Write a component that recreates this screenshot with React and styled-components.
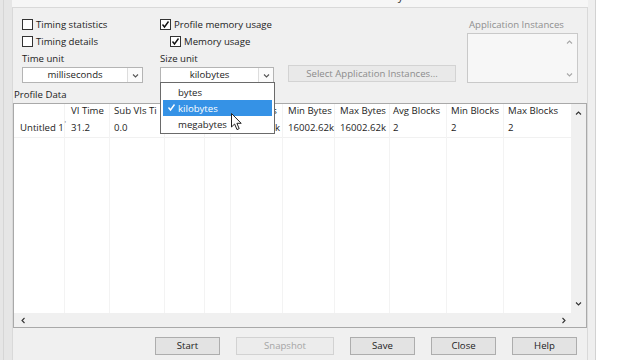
import React from 'react';
import styled, { createGlobalStyle } from 'styled-components';

const GlobalStyle = createGlobalStyle`
  html, body { margin: 0; padding: 0; background: #ffffff; }
  body {
    font-family: 'Open Sans', 'Noto Sans', sans-serif;
    font-size: 9.6px;
    color: #1c1c1c;
  }
`;

const Screen = styled.div`
  display: flex;
  width: 640px;
  height: 360px;
  overflow: hidden;
  background: #ffffff;
`;

const Window = styled.div`
  display: flex;
  width: 596px;
  height: 100%;
  background: #e8e8e8;
`;

const LeftStrip = styled.div`
  width: 12px;
  background: linear-gradient(to right, #e6e6e6 3px, #d6d6d6 3px, #d6d6d6 4px, #e6e6e6 4px);
`;

const RightStrip = styled.div`
  width: 7px;
  background: #efefef;
  border-right: 1px solid #d2d2d2;
`;

const Main = styled.div`
  flex: 1;
  display: flex;
  flex-direction: column;
  min-width: 0;
`;

const TitleStrip = styled.div`
  height: 7px;
  overflow: hidden;
  background: #f6f6f6;
`;

const Title = styled.span`
  display: block;
  margin-top: -10px;
  padding-left: 214px;
  font-size: 11px;
  line-height: 12px;
  color: #333;
`;

const Panel = styled.div`
  flex: 1;
  display: flex;
  flex-direction: column;
  background: #f0f0f0;
  border: 1px solid #d9d9d9;
  border-bottom: none;
`;

const TopSection = styled.div`
  display: flex;
  padding: 8px 0 0 9px;
`;

const Col = styled.div`
  display: flex;
  flex-direction: column;
  width: ${p => p.w}px;
  margin-right: ${p => p.gap || 0}px;
  justify-content: ${p => (p.bottom ? 'flex-end' : 'flex-start')};
`;

const CheckRow = styled.div`
  display: flex;
  align-items: center;
  height: 17px;
  gap: 3px;
  padding-left: ${p => p.indent || 0}px;
  white-space: nowrap;
`;

const Box = styled.span`
  width: 11px;
  height: 11px;
  box-sizing: border-box;
  border: 1px solid #333333;
  background: #ffffff;
  display: flex;
  align-items: center;
  justify-content: center;
`;

const FieldLabel = styled.div`
  height: 17px;
  line-height: 17px;
  white-space: nowrap;
  color: ${p => (p.muted ? '#8f8f8f' : '#1c1c1c')};
  padding-left: ${p => p.pad || 0}px;
`;

const SelectWrap = styled.div`
  position: relative;
`;

const Select = styled.div`
  display: flex;
  height: 16px;
  box-sizing: border-box;
  border: 1px solid #b4b4b4;
  background: #ffffff;
`;

const SelectText = styled.div`
  flex: 1;
  text-align: center;
  line-height: 14px;
`;

const ArrowBox = styled.div`
  width: 14px;
  border-left: 1px solid #dddddd;
  background: #fbfbfb;
  display: flex;
  align-items: center;
  justify-content: center;
`;

const Dropdown = styled.div`
  position: absolute;
  top: 15px;
  left: 0;
  width: 115px;
  height: 52px;
  box-sizing: border-box;
  border: 1px solid #6a6a6a;
  background: #ffffff;
  padding: 1px 2px 2px;
  z-index: 10;
`;

const Option = styled.div`
  display: flex;
  align-items: center;
  height: 16px;
  padding-left: 15px;
  position: relative;
  background: ${p => (p.active ? '#3592e6' : 'transparent')};
  color: ${p => (p.active ? '#ffffff' : '#1c1c1c')};
`;

const CheckMark = styled.span`
  position: absolute;
  left: 4px;
  top: 3px;
  display: flex;
`;

const Cursor = styled.div`
  position: absolute;
  left: 70px;
  top: 30px;
  display: flex;
`;

const WideButton = styled.div`
  height: 17px;
  margin-bottom: 1px;
  box-sizing: border-box;
  border: 1px solid #d3d3d3;
  background: #e9e9e9;
  color: #8c8c8c;
  line-height: 15px;
  text-align: center;
  white-space: nowrap;
`;

const ListBox = styled.div`
  display: flex;
  height: 50px;
  box-sizing: border-box;
  border: 1px solid #c9c9c9;
  background: #f7f7f7;
`;

const ListBody = styled.div`
  flex: 1;
`;

const ListScroll = styled.div`
  width: 16px;
  display: flex;
  flex-direction: column;
  justify-content: space-between;
  align-items: center;
  padding: 5px 0 4px;
`;

const SectionLabel = styled.div`
  height: 16px;
  line-height: 16px;
  margin-top: 4px;
  padding-left: 1px;
`;

const Table = styled.div`
  height: 225px;
  box-sizing: border-box;
  border: 1px solid #a9a9a9;
  background: #ffffff;
  display: flex;
  flex-direction: column;
`;

const TableBody = styled.div`
  flex: 1;
  display: flex;
  min-height: 0;
`;

const Columns = styled.div`
  flex: 1;
  display: flex;
  overflow: hidden;
`;

const Column = styled.div`
  width: ${p => p.w}px;
  flex: none;
  box-sizing: border-box;
  border-right: 1px solid #f3f3f3;
  display: flex;
  flex-direction: column;
`;

const HeadCell = styled.div`
  height: 14px;
  line-height: 14px;
  padding-left: ${p => p.pad}px;
  white-space: nowrap;
`;

const DataCell = styled.div`
  height: 19px;
  line-height: 19px;
  padding-left: ${p => p.pad}px;
  border-bottom: 1px solid #f1f1f1;
  white-space: nowrap;
  position: relative;
`;

const Tick = styled.span`
  position: absolute;
  right: -2px;
  top: 2px;
  font-size: 7px;
  line-height: 7px;
  color: #777;
`;

const VScroll = styled.div`
  width: 15px;
  background: #f0f0f0;
  display: flex;
  flex-direction: column;
  justify-content: space-between;
  align-items: center;
  padding: 6px 0 6px;
`;

const HScroll = styled.div`
  height: 14px;
  display: flex;
  background: #f0f0f0;
`;

const HTrack = styled.div`
  flex: 1;
  display: flex;
  justify-content: space-between;
  align-items: center;
  padding: 0 4px 0 6px;
`;

const Corner = styled.div`
  width: 15px;
`;

const ButtonRow = styled.div`
  display: flex;
  justify-content: flex-end;
  gap: 16px;
  padding: 9px 10px 0 0;
`;

const Button = styled.div`
  width: ${p => p.w || 65}px;
  height: 18px;
  box-sizing: border-box;
  border: 1px solid ${p => (p.disabled ? '#d2d2d2' : '#adadad')};
  background: ${p => (p.disabled ? '#ececec' : '#e3e3e3')};
  color: ${p => (p.disabled ? '#a5a5a5' : '#1c1c1c')};
  line-height: 16px;
  text-align: center;
`;

function Chevron({ dir = 'down', color = '#555', size = 7 }) {
  const pts = {
    down: '1,2.5 3.5,5 6,2.5',
    up: '1,4.5 3.5,2 6,4.5',
    left: '4.5,1 2,3.5 4.5,6',
    right: '2.5,1 5,3.5 2.5,6',
  }[dir];
  return (
    <svg width={size} height={size} viewBox="0 0 7 7">
      <polyline points={pts} fill="none" stroke={color} strokeWidth="1.1" />
    </svg>
  );
}

function Tickmark({ color = '#111' }) {
  return (
    <svg width="9" height="9" viewBox="0 0 9 9">
      <polyline points="1.5,4.5 3.5,7 7.5,1.5" fill="none" stroke={color} strokeWidth="1.4" />
    </svg>
  );
}

function Check({ label, checked, indent }) {
  return (
    <CheckRow indent={indent}>
      <Box>{checked && <Tickmark />}</Box>
      <span>{label}</span>
    </CheckRow>
  );
}

// the columns between "Sub VIs Time" and "Avg Bytes" sit under the open dropdown
const columns = [
  { w: 51, pad: 6, head: '', value: 'Untitled 1', tick: true },
  { w: 45, pad: 6, head: 'VI Time', value: '31.2' },
  { w: 55, pad: 4, head: 'Sub VIs Ti', value: '0.0' },
  { w: 40, pad: 4, head: '', value: '' },
  { w: 26, pad: 4, head: '', value: '' },
  { w: 52, pad: 3, head: 'Avg Bytes', value: '16002.62k' },
  { w: 52, pad: 5, head: 'Min Bytes', value: '16002.62k' },
  { w: 55, pad: 5, head: 'Max Bytes', value: '16002.62k' },
  { w: 57, pad: 3, head: 'Avg Blocks', value: '2' },
  { w: 57, pad: 4, head: 'Min Blocks', value: '2' },
  { w: 70, pad: 4, head: 'Max Blocks', value: '2' },
];

function App() {
  return (
    <Screen>
      <GlobalStyle />
      <Window>
        <LeftStrip />
        <Main>
          <TitleStrip>
            <Title>Profile - Performance and Memory</Title>
          </TitleStrip>
          <Panel>
            <TopSection>
              <Col w={121} gap={17}>
                <Check label="Timing statistics" />
                <Check label="Timing details" />
                <FieldLabel>Time unit</FieldLabel>
                <Select>
                  <SelectText>milliseconds</SelectText>
                  <ArrowBox><Chevron /></ArrowBox>
                </Select>
              </Col>
              <Col w={114} gap={14}>
                <Check label="Profile memory usage" checked />
                <Check label="Memory usage" checked indent={10} />
                <FieldLabel>Size unit</FieldLabel>
                <SelectWrap>
                  <Select>
                    <SelectText>kilobytes</SelectText>
                    <ArrowBox><Chevron /></ArrowBox>
                  </Select>
                  <Dropdown>
                    <Option>bytes</Option>
                    <Option active>
                      <CheckMark><Tickmark color="#ffffff" /></CheckMark>
                      kilobytes
                    </Option>
                    <Option>megabytes</Option>
                    <Cursor>
                      <svg width="12" height="18" viewBox="0 0 12 18">
                        <path
                          d="M0.5 0.5 L0.5 14 L3.6 11 L6 16.6 L8.2 15.6 L5.9 10.3 L10.2 10.3 Z"
                          fill="#ffffff"
                          stroke="#222"
                          strokeWidth="1"
                          strokeLinejoin="round"
                        />
                      </svg>
                    </Cursor>
                  </Dropdown>
                </SelectWrap>
              </Col>
              <Col w={168} gap={11} bottom>
                <WideButton>Select Application Instances...</WideButton>
              </Col>
              <Col w={111}>
                <FieldLabel muted pad={2}>Application Instances</FieldLabel>
                <ListBox>
                  <ListBody />
                  <ListScroll>
                    <Chevron dir="up" color="#a8a8a8" />
                    <Chevron dir="down" color="#a8a8a8" />
                  </ListScroll>
                </ListBox>
              </Col>
            </TopSection>
            <SectionLabel>Profile Data</SectionLabel>
            <Table>
              <TableBody>
                <Columns>
                  {columns.map((c, i) => (
                    <Column key={i} w={c.w}>
                      <HeadCell pad={c.pad}>{c.head}</HeadCell>
                      <DataCell pad={c.pad}>
                        {c.value}
                        {c.tick && <Tick>'</Tick>}
                      </DataCell>
                    </Column>
                  ))}
                </Columns>
                <VScroll>
                  <Chevron dir="up" color="#333" />
                  <Chevron dir="down" color="#333" />
                </VScroll>
              </TableBody>
              <HScroll>
                <HTrack>
                  <Chevron dir="left" color="#333" />
                  <Chevron dir="right" color="#333" />
                </HTrack>
                <Corner />
              </HScroll>
            </Table>
            <ButtonRow>
              <Button>Start</Button>
              <Button w={98} disabled>Snapshot</Button>
              <Button>Save</Button>
              <Button>Close</Button>
              <Button>Help</Button>
            </ButtonRow>
          </Panel>
        </Main>
        <RightStrip />
      </Window>
    </Screen>
  );
}

export default App;
